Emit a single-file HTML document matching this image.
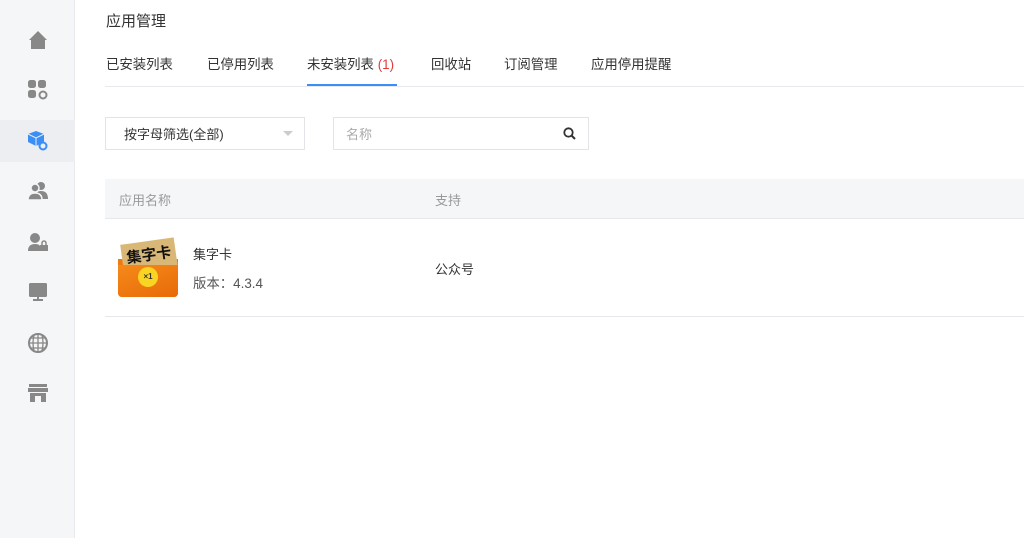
<!DOCTYPE html>
<html><head><meta charset="utf-8"><style>
*{margin:0;padding:0;box-sizing:border-box}
body{width:1024px;height:538px;background:#fff;font-family:"Liberation Sans","Noto Sans CJK SC",sans-serif;color:#333;position:relative;overflow:hidden;font-size:13px}
.side{position:absolute;left:0;top:0;width:75px;height:538px;background:#f5f6f8;border-right:1px solid #e8e9ec}
.ic{position:absolute;left:0;width:75px;height:42px;display:flex;align-items:center;justify-content:center}
.ic.act{background:#eceef2}
.abs{position:absolute;white-space:nowrap}
.tab{position:absolute;top:53px;font-size:13.4px;color:#333}
</style></head><body>
<div class="side">
 <div class="ic" style="top:19px"><svg width="20" height="20" viewBox="0 0 20 20"><path d="M10 1 L1 10 L3 10 L3 19 L17 19 L17 10 L19 10Z" fill="#888"/></svg></div>
 <div class="ic" style="top:69px"><svg width="22" height="22" viewBox="0 0 22 22" fill="#888"><rect x="1" y="1" width="8" height="8" rx="2.5"/><rect x="11" y="1" width="8" height="8" rx="2.5"/><rect x="1" y="11" width="8" height="8" rx="2.5"/><circle cx="16" cy="16" r="3.5" fill="none" stroke="#888" stroke-width="2"/></svg></div>
 <div class="ic act" style="top:120px"><svg width="22" height="22" viewBox="0 0 22 22"><path d="M9 1 L17 4 L17 12 L9 16 L1 12 L1 4Z" fill="#3a8ef6"/><path d="M1 4 L9 8 L17 4 M9 8 L9 16" stroke="#eceef2" stroke-width="1" fill="none"/><circle cx="16" cy="16" r="3.5" fill="none" stroke="#3a8ef6" stroke-width="2"/></svg></div>
 <div class="ic" style="top:170px"><svg width="22" height="20" viewBox="0 0 22 20" fill="#888"><circle cx="14" cy="5" r="4"/><path d="M8 18 Q8 10 14 10 Q21 10 21 18Z"/><circle cx="8" cy="7" r="4" stroke="#f5f6f8" stroke-width="1.5"/><path d="M1 19 Q1 12 8 12 Q15 12 15 19Z" stroke="#f5f6f8" stroke-width="1.5"/></svg></div>
 <div class="ic" style="top:221px"><svg width="22" height="20" viewBox="0 0 22 20" fill="#888"><circle cx="8" cy="6" r="5"/><path d="M1 19 Q1 12 8 12 Q12 12 13 14 L13 19Z"/><rect x="13" y="13" width="8" height="6"/><path d="M15 13 V11 A2 2 0 0 1 19 11 V13" fill="none" stroke="#888" stroke-width="1.5"/></svg></div>
 <div class="ic" style="top:271px"><svg width="20" height="20" viewBox="0 0 20 20" fill="#888"><rect x="1" y="1" width="18" height="14" rx="1.5"/><rect x="9" y="15" width="2" height="3"/><rect x="5" y="17" width="10" height="2"/></svg></div>
 <div class="ic" style="top:322px"><svg width="22" height="22" viewBox="0 0 22 22" fill="none" stroke="#888" stroke-width="2"><circle cx="11" cy="11" r="9"/><path d="M2 11H20M11 2V20M4 6H18M4 16H18M7 3.5Q5 11 7 18.5M15 3.5Q17 11 15 18.5" stroke-width="1.3"/></svg></div>
 <div class="ic" style="top:372px"><svg width="22" height="20" viewBox="0 0 22 20" fill="#888"><rect x="2" y="1" width="18" height="3"/><path d="M1 5 H21 L21 9 H1Z"/><path d="M3 10 H19 V19 H3Z M8 13 V19 H14 V13Z" fill-rule="evenodd"/></svg></div>
</div>
<div class="abs" style="left:106px;top:10px;font-size:15px;color:#333">应用管理</div>
<div class="tab" style="left:106px">已安装列表</div>
<div class="tab" style="left:207px">已停用列表</div>
<div class="tab" style="left:307px">未安装列表 <span style="color:#e23b3b">(1)</span></div>
<div class="tab" style="left:431px">回收站</div>
<div class="tab" style="left:504px">订阅管理</div>
<div class="tab" style="left:591px">应用停用提醒</div>
<div class="abs" style="left:307px;top:84px;width:90px;height:3px;background:#3a8ef6"></div>
<div class="abs" style="left:105px;top:86px;width:919px;height:1px;background:#e8e9ec"></div>
<div class="abs" style="left:105px;top:117px;width:200px;height:33px;border:1px solid #e3e4e8"></div>
<div class="abs" style="left:124px;top:124px;color:#333">按字母筛选(全部)</div>
<div class="abs" style="left:283px;top:131px;width:0;height:0;border-left:5px solid transparent;border-right:5px solid transparent;border-top:5px solid #ccc"></div>
<div class="abs" style="left:333px;top:117px;width:256px;height:33px;border:1px solid #e3e4e8"></div>
<div class="abs" style="left:346px;top:124px;color:#aaa">名称</div>
<svg class="abs" style="left:563px;top:127px" width="13" height="13" viewBox="0 0 13 13"><circle cx="5.5" cy="5.5" r="4.2" fill="none" stroke="#333" stroke-width="1.8"/><path d="M8.5 8.5 L12 12" stroke="#333" stroke-width="2"/></svg>
<div class="abs" style="left:105px;top:179px;width:919px;height:40px;background:#f5f6f8;border-bottom:1px solid #e6e7ea"></div>
<div class="abs" style="left:119px;top:190px;color:#999">应用名称</div>
<div class="abs" style="left:435px;top:190px;color:#999">支持</div>
<div class="abs" style="left:118px;top:237px;width:60px;height:60px;border-radius:4px;overflow:hidden">
 <div style="position:absolute;left:0;top:22px;width:60px;height:38px;background:#f07a12"></div>
 <div style="position:absolute;left:4px;top:4px;width:54px;height:30px;background:#d9b877;transform:rotate(-8deg);font-size:15px;font-weight:bold;color:#111;text-align:center;line-height:30px">集字卡</div>
 <div style="position:absolute;left:0;top:28px;width:60px;height:32px;background:linear-gradient(160deg,#f58a1a,#e86a08)"></div>
 <div style="position:absolute;left:20px;top:30px;width:20px;height:20px;border-radius:50%;background:#f9d423;font-size:8px;font-weight:bold;text-align:center;line-height:20px;color:#333">×1</div>
</div>
<div class="abs" style="left:193px;top:244px;color:#333">集字卡</div>
<div class="abs" style="left:193px;top:272px;color:#555;font-size:13.4px">版本：4.3.4</div>
<div class="abs" style="left:435px;top:259px;color:#333">公众号</div>
<div class="abs" style="left:105px;top:316px;width:919px;height:1px;background:#e6e7ea"></div>
</body></html>
